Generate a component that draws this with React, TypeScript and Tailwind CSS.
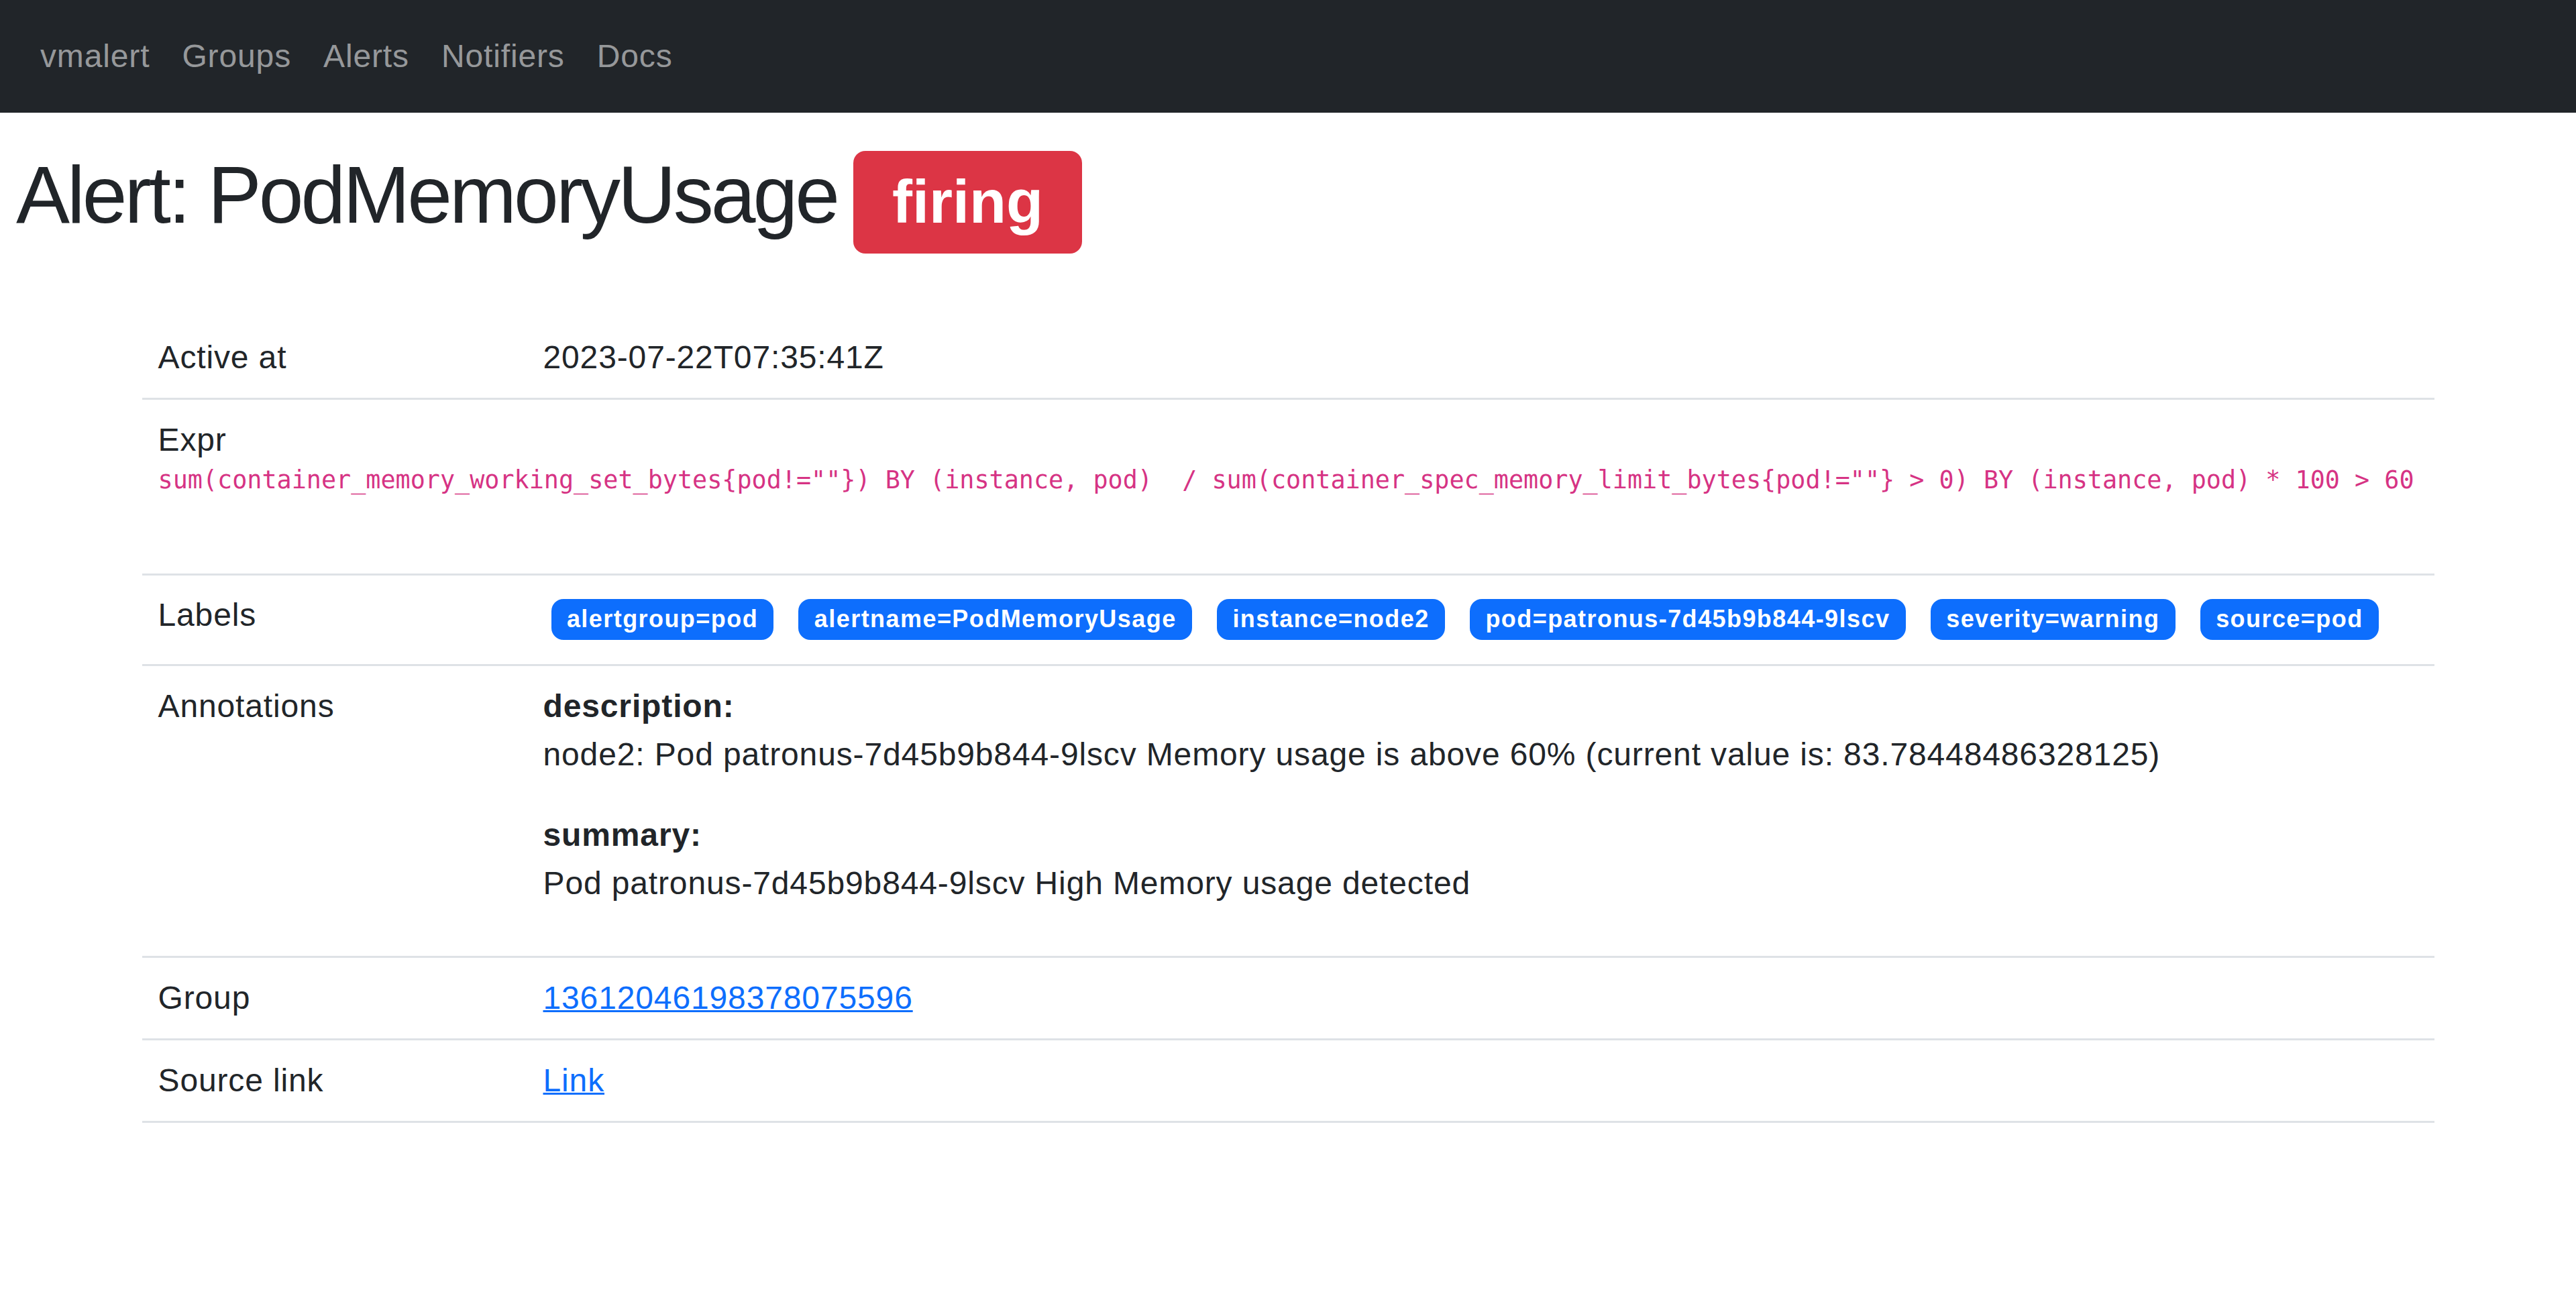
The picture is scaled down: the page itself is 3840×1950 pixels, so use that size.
import React from "react";

const navItems = ["vmalert", "Groups", "Alerts", "Notifiers", "Docs"];

const labels = [
  "alertgroup=pod",
  "alertname=PodMemoryUsage",
  "instance=node2",
  "pod=patronus-7d45b9b844-9lscv",
  "severity=warning",
  "source=pod",
];

const expr =
  'sum(container_memory_working_set_bytes{pod!=""}) BY (instance, pod)  / sum(container_spec_memory_limit_bytes{pod!=""} > 0) BY (instance, pod) * 100 > 60';

function Row({ label, children }: { label: string; children: React.ReactNode }) {
  return (
    <div className="grid grid-cols-[574px_1fr] border-b-[3px] border-[#dee2e6]">
      <div className="px-[24px] py-[24px]">{label}</div>
      <div className="px-[24px] py-[24px]">{children}</div>
    </div>
  );
}

export default function App() {
  return (
    <div className="min-h-screen bg-white text-[#212529] font-['Liberation_Sans',Arial,sans-serif] text-[48px] leading-[72px] tracking-[0.018em]">
      <nav className="h-[168px] bg-[#212529] flex items-center px-[36px]">
        {navItems.map((n) => (
          <a key={n} href="#" className="px-[24px] text-[rgba(255,255,255,0.55)]">
            {n}
          </a>
        ))}
      </nav>

      <h1 className="mt-[50px] px-[24px] flex items-baseline gap-[24px] text-[120px] leading-[144px] font-normal">
        <span className="tracking-[-0.033em]">Alert: PodMemoryUsage</span>
        <span className="bg-[#dc3545] text-white font-bold text-[90px] leading-none tracking-normal px-[58px] py-[31.5px] rounded-[18px]">
          firing
        </span>
      </h1>

      <div className="w-[3417px] mx-auto mt-[95px]">
        <Row label="Active at">2023-07-22T07:35:41Z</Row>

        <div className="border-b-[3px] border-[#dee2e6] px-[24px] pt-[24px] pb-[116px]">
          <div>Expr</div>
          <code className="block font-['DejaVu_Sans_Mono',monospace] text-[36.75px] leading-[47px] tracking-normal text-[#d63384] whitespace-pre">
            {expr}
          </code>
        </div>

        <div className="grid grid-cols-[574px_1fr] h-[135px] border-b-[3px] border-[#dee2e6]">
          <div className="px-[24px] pt-[23px]">Labels</div>
          <div className="pl-[36px] pr-[24px] pt-[35px] flex flex-wrap items-start gap-[37px]">
            {labels.map((l) => (
              <span
                key={l}
                className="bg-[#0d6efd] text-white font-bold text-[36px] leading-none tracking-[0.04em] px-[23.4px] py-[12.6px] rounded-[18px]"
              >
                {l}
              </span>
            ))}
          </div>
        </div>

        <Row label="Annotations">
          <p className="mb-[48px]">
            <b className="font-bold">description:</b>
            <br />
            node2: Pod patronus-7d45b9b844-9lscv Memory usage is above 60% (current value is: 83.78448486328125)
          </p>
          <p className="mb-[48px]">
            <b className="font-bold">summary:</b>
            <br />
            Pod patronus-7d45b9b844-9lscv High Memory usage detected
          </p>
        </Row>

        <Row label="Group">
          <a href="#" className="text-[#0d6efd] underline decoration-[3px]">
            13612046198378075596
          </a>
        </Row>

        <Row label="Source link">
          <a href="#" className="text-[#0d6efd] underline decoration-[3px]">
            Link
          </a>
        </Row>
      </div>
    </div>
  );
}
